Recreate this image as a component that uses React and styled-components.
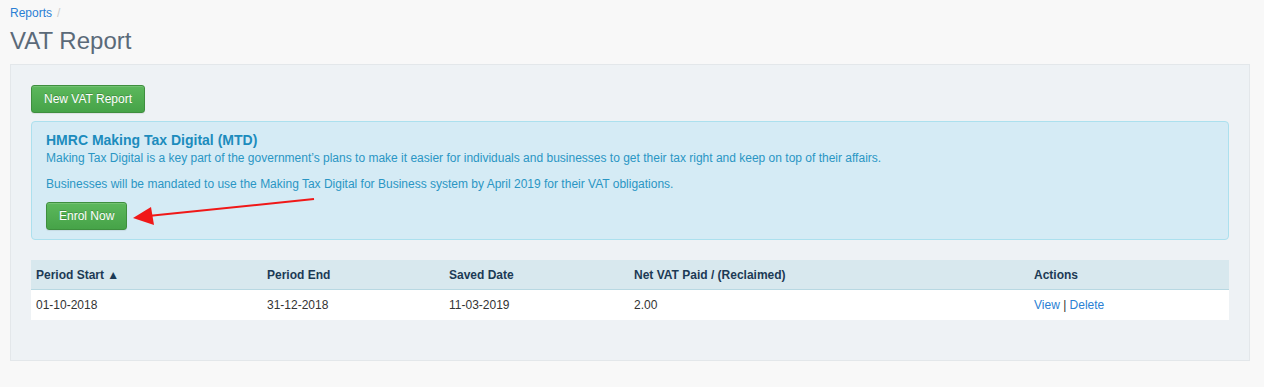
import React from 'react';
import styled, { createGlobalStyle } from 'styled-components';

const GlobalStyle = createGlobalStyle`
  body {
    margin: 0;
    background: #f8f8f8;
    font-family: "Liberation Sans", Arial, sans-serif;
    font-size: 12px;
    color: #333;
  }
`;

const Page = styled.div`
  padding: 0 14px 0 10px;
`;

const Breadcrumb = styled.div`
  padding-top: 6px;
  height: 14px;
  line-height: 14px;
  a { color: #2a7fd4; text-decoration: none; }
  span { color: #ccc; margin-left: 5px; }
`;

const Title = styled.h1`
  margin: 9px 0 0;
  height: 35px;
  line-height: 24px;
  font-size: 24px;
  font-weight: 400;
  color: #5b6a79;
`;

const Panel = styled.div`
  background: #eef2f5;
  border: 1px solid #e3e7ea;
  padding: 20px 20px 40px;
`;

const Button = styled.button`
  display: inline-block;
  height: 28px;
  padding: 0 12px;
  font-family: inherit;
  font-size: 12px;
  color: #fff;
  text-shadow: 0 -1px 0 rgba(0, 0, 0, 0.2);
  background-image: linear-gradient(#5cb85c, #46a348);
  border: 1px solid #3e8f3e;
  border-radius: 3px;
  box-shadow: inset 0 1px 0 rgba(255, 255, 255, 0.15), 0 1px 1px rgba(0, 0, 0, 0.075);
  margin-top: ${p => p.$mt || 0}px;
`;

const Alert = styled.div`
  position: relative;
  margin-top: 8px;
  background: #d5ebf5;
  border: 1px solid #ace0ee;
  border-radius: 4px;
  padding: 8px 14px 9px;
  color: #2a96c4;
`;

const AlertTitle = styled.h4`
  margin: 0;
  font-size: 14px;
  line-height: 20px;
  font-weight: 700;
  color: #1c8cbd;
`;

const Para = styled.p`
  margin: ${p => p.$mt || 0}px 0 0;
  line-height: 17px;
`;

const Arrow = styled.svg`
  position: absolute;
  left: 100px;
  top: 73px;
  overflow: visible;
`;

const Table = styled.table`
  width: 100%;
  margin-top: 20px;
  border-collapse: collapse;
  th {
    background: #d8e8ee;
    color: #1c3a55;
    text-align: left;
    font-weight: 700;
    height: 29px;
    padding: 0 5px;
    border-bottom: 1px solid #b8d8e2;
  }
  td {
    background: #fff;
    height: 30px;
    padding: 0 5px;
  }
  a { color: #2a7fd4; text-decoration: none; }
`;

const rows = [
  { start: '01-10-2018', end: '31-12-2018', saved: '11-03-2019', net: '2.00' },
];

export default function App() {
  return (
    <Page>
      <GlobalStyle />
      <Breadcrumb>
        <a href="#">Reports</a>
        <span>/</span>
      </Breadcrumb>
      <Title>VAT Report</Title>
      <Panel>
        <Button>New VAT Report</Button>
        <Alert>
          <AlertTitle>HMRC Making Tax Digital (MTD)</AlertTitle>
          <Para>Making Tax Digital is a key part of the government’s plans to make it easier for individuals and businesses to get their tax right and keep on top of their affairs.</Para>
          <Para $mt={9}>Businesses will be mandated to use the Making Tax Digital for Business system by April 2019 for their VAT obligations.</Para>
          <Button $mt={9}>Enrol Now</Button>
          <Arrow width="190" height="36" viewBox="0 0 190 36">
            <line x1="182" y1="4" x2="16" y2="21" stroke="#f01818" strokeWidth="2" />
            <polygon points="1,23 19,12 22,30" fill="#f01818" />
          </Arrow>
        </Alert>
        <Table>
          <colgroup>
            <col style={{ width: 231 }} />
            <col style={{ width: 182 }} />
            <col style={{ width: 185 }} />
            <col style={{ width: 400 }} />
            <col />
          </colgroup>
          <thead>
            <tr>
              <th>Period Start ▲</th>
              <th>Period End</th>
              <th>Saved Date</th>
              <th>Net VAT Paid / (Reclaimed)</th>
              <th>Actions</th>
            </tr>
          </thead>
          <tbody>
            {rows.map(r => (
              <tr key={r.start}>
                <td>{r.start}</td>
                <td>{r.end}</td>
                <td>{r.saved}</td>
                <td>{r.net}</td>
                <td><a href="#">View</a> | <a href="#">Delete</a></td>
              </tr>
            ))}
          </tbody>
        </Table>
      </Panel>
    </Page>
  );
}
